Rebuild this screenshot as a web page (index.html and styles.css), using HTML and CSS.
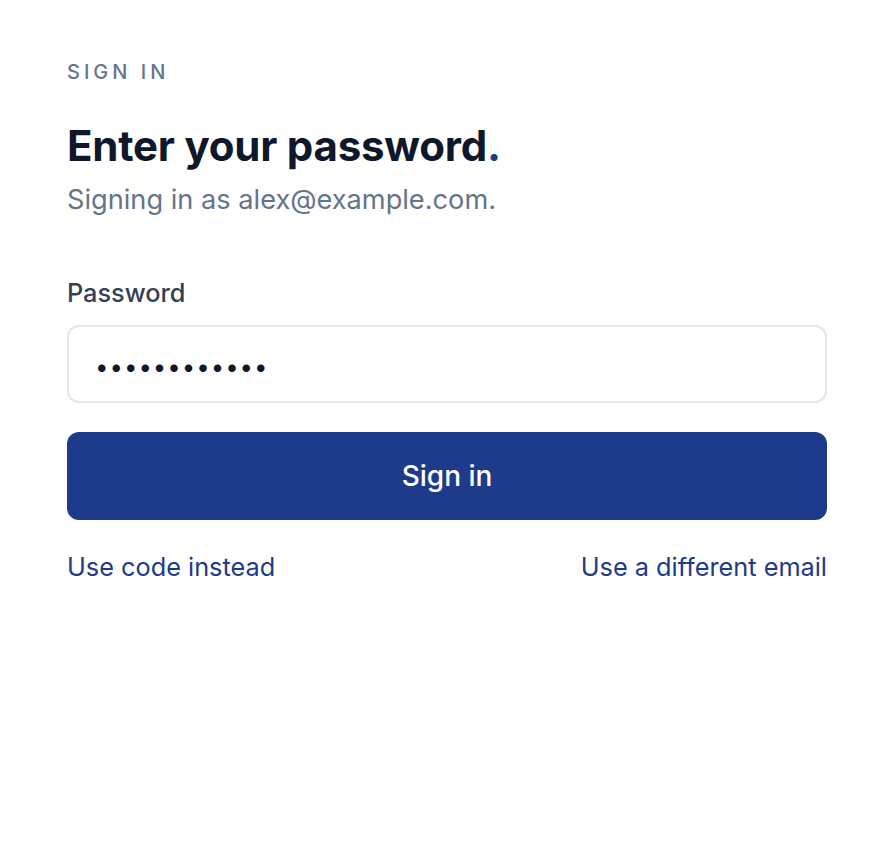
FILE: index.html
```html
<!DOCTYPE html>
<html lang="en">
<head>
<meta charset="utf-8">
<title>Sign in</title>
<link rel="stylesheet" href="styles.css">
</head>
<body>
<main class="page">
  <div class="card">
    <p class="eyebrow">SIGN IN</p>
    <h1 class="title">Enter your password<span class="dot">.</span></h1>
    <p class="subtitle">Signing in as alex@example.com.</p>
    <form class="form">
      <label class="label" for="pw">Password</label>
      <input class="input" id="pw" type="password" value="correcthorse">
      <button class="button" type="button">Sign in</button>
    </form>
    <div class="links">
      <a class="link" href="#">Use code instead</a>
      <a class="link" href="#">Use a different email</a>
    </div>
  </div>
</main>
</body>
</html>
```
FILE: styles.css
```css
* { box-sizing: border-box; }
html, body { margin: 0; padding: 0; background: #ffffff; }
body { font-family: Inter, "Noto Sans", sans-serif; color: #0f172a; }
.page { padding: 56px 45px 0 67px; }
.card { width: 760px; display: flex; flex-direction: column; }
.eyebrow {
  margin: 0;
  font-size: 20px;
  letter-spacing: 0.2em;
  color: #64748b;
  font-weight: 500;
  line-height: 32px;
}
.title {
  margin: 33px 0 0;
  font-size: 42px;
  font-weight: 700;
  line-height: 50px;
  color: #0f172a;
  letter-spacing: -0.005em;
}
.dot { color: #1e3a8a; }
.subtitle {
  margin: 11px 0 0;
  font-size: 27.2px;
  line-height: 36px;
  color: #64748b;
}
.form { display: flex; flex-direction: column; margin-top: 59px; }
.label { font-size: 25.3px; font-weight: 500; color: #334155; line-height: 32px; }
.input {
  margin-top: 16px;
  height: 78px;
  border: 2px solid #e2e8f0;
  border-radius: 12px;
  padding: 4px 26px 0;
  font-family: Inter, sans-serif;
  font-size: 24px;
  letter-spacing: 0.04em;
  color: #0f172a;
  outline: none;
}
.button {
  margin-top: 29px;
  height: 88px;
  border: none;
  border-radius: 12px;
  background: #1e3a8a;
  color: #ffffff;
  font-family: Inter, sans-serif;
  font-size: 28px;
  font-weight: 500;
}
.links { display: flex; justify-content: space-between; margin-top: 29px; }
.link { color: #1e3a8a; text-decoration: none; font-size: 25.3px; line-height: 36px; }
```
